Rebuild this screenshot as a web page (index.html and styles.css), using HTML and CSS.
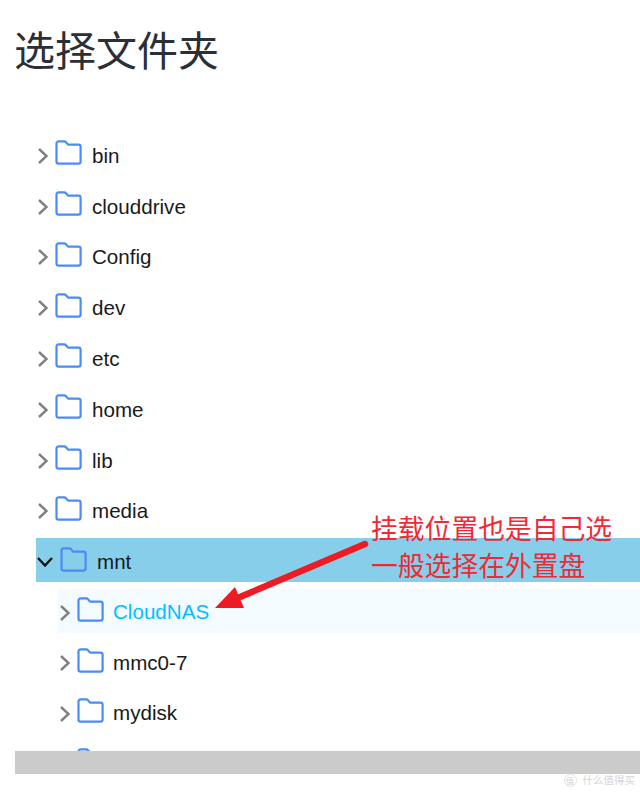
FILE: index.html
```html
<!DOCTYPE html>
<html lang="zh-CN">
<head>
  <meta charset="UTF-8">
  <title>选择文件夹</title>
  <link rel="stylesheet" href="styles.css">
</head>
<body>
  <svg class="defs" width="0" height="0">
    <symbol id="folder" viewBox="0 0 28 25">
      <path d="M2.5 3.5C2.5 2.2 3.4 1.4 4.6 1.4H10.2C11 1.4 11.5 1.7 12 2.3L14 4.6H24.4C25.7 4.6 26.6 5.5 26.6 6.8V21.4C26.6 22.7 25.7 23.6 24.4 23.6H4.6C3.4 23.6 2.5 22.7 2.5 21.4Z" fill="none" stroke="#4a8cf7" stroke-width="2.2" stroke-linejoin="round"/>
    </symbol>
    <symbol id="chev-right" viewBox="0 0 12 18">
      <path d="M2 2L9.5 9L2 16" fill="none" stroke="#808080" stroke-width="2.4"/>
    </symbol>
    <symbol id="chev-down" viewBox="0 0 18 12">
      <path d="M2 2L9 9.5L16 2" fill="none" stroke="#111" stroke-width="2.4"/>
    </symbol>
  </svg>

  <h1 class="title">选择文件夹</h1>

  <div class="tree">
    <div class="row"><svg class="chev"><use href="#chev-right"/></svg><svg class="folder"><use href="#folder"/></svg><span class="name">bin</span></div>
    <div class="row"><svg class="chev"><use href="#chev-right"/></svg><svg class="folder"><use href="#folder"/></svg><span class="name">clouddrive</span></div>
    <div class="row"><svg class="chev"><use href="#chev-right"/></svg><svg class="folder"><use href="#folder"/></svg><span class="name">Config</span></div>
    <div class="row"><svg class="chev"><use href="#chev-right"/></svg><svg class="folder"><use href="#folder"/></svg><span class="name">dev</span></div>
    <div class="row"><svg class="chev"><use href="#chev-right"/></svg><svg class="folder"><use href="#folder"/></svg><span class="name">etc</span></div>
    <div class="row"><svg class="chev"><use href="#chev-right"/></svg><svg class="folder"><use href="#folder"/></svg><span class="name">home</span></div>
    <div class="row"><svg class="chev"><use href="#chev-right"/></svg><svg class="folder"><use href="#folder"/></svg><span class="name">lib</span></div>
    <div class="row"><svg class="chev"><use href="#chev-right"/></svg><svg class="folder"><use href="#folder"/></svg><span class="name">media</span></div>
    <div class="row open"><svg class="chev-open"><use href="#chev-down"/></svg><svg class="folder"><use href="#folder"/></svg><span class="name">mnt</span></div>
    <div class="children">
      <div class="row active"><svg class="chev"><use href="#chev-right"/></svg><svg class="folder"><use href="#folder"/></svg><span class="name">CloudNAS</span></div>
      <div class="row"><svg class="chev"><use href="#chev-right"/></svg><svg class="folder"><use href="#folder"/></svg><span class="name">mmc0-7</span></div>
      <div class="row"><svg class="chev"><use href="#chev-right"/></svg><svg class="folder"><use href="#folder"/></svg><span class="name">mydisk</span></div>
      <div class="row"><svg class="chev"><use href="#chev-right"/></svg><svg class="folder"><use href="#folder"/></svg></div>
    </div>
  </div>
  <div class="scrollbar"></div>

  <!-- red note drawn over the screenshot -->
  <div class="note">挂载位置也是自己选<br>一般选择在外置盘</div>
  <svg class="arrow" width="640" height="794">
    <path d="M365 544L240 597" stroke="#ed1c24" stroke-width="6.5" stroke-linecap="round"/>
    <path d="M215 608L235 587L244 608Z" fill="#ed1c24"/>
  </svg>

  <div class="mark"><span class="mark-logo">值</span>什么值得买</div>
</body>
</html>
```

FILE: styles.css
```css
* { box-sizing: border-box; }
html, body { height: 100%; }
body {
  margin: 0;
  background: #fff;
  font-family: "Liberation Sans", Arial, "Noto Sans CJK SC", sans-serif;
  overflow: hidden;
  position: relative;
}
.defs { position: absolute; }
.title {
  margin: 0;
  padding: 24px 0 0 14px;
  height: 132px;
  font-family: "Noto Sans CJK SC", sans-serif;
  font-weight: 400;
  font-size: 41px;
  line-height: 48px;
  color: #2b2f36;
}
.tree {
  margin-left: 36px;
  height: 619px;
  overflow: hidden;
}
.row {
  display: flex;
  align-items: center;
  height: 43.5px;
  margin-bottom: 7.3px;
  font-size: 20.6px;
  color: #1a1a1a;
}
.chev { width: 12px; height: 18px; margin: 4px 0 0 1px; flex: none; }
.chev-open { width: 18px; height: 12px; margin-top: 3px; flex: none; }
.folder { width: 28px; height: 25px; margin: -2px 10px 0 5px; flex: none; }
.name { padding-top: 4px; }
.row.open { background: #87ceeb; }
.children { margin-left: 22px; }
.children .row { margin-bottom: 6.8px; }
.children .name { margin-left: -1px; padding-top: 3px; }
.row.active { background: #f3fbff; color: #00bfff; }
.scrollbar {
  margin-left: 15px;
  height: 23px;
  background: #cbcbcb;
}
.note {
  position: absolute;
  left: 371px;
  top: 509px;
  font-family: "Noto Sans CJK SC", sans-serif;
  font-size: 26.8px;
  line-height: 37px;
  color: #ee2a35;
  white-space: nowrap;
}
.arrow { position: absolute; left: 0; top: 0; }
.mark {
  position: absolute;
  right: 5px;
  top: 772px;
  display: flex;
  align-items: center;
  gap: 6px;
  font-family: "Noto Sans CJK SC", sans-serif;
  font-size: 10.5px;
  line-height: 16px;
  color: #d4d4d4;
}
.mark-logo {
  width: 13px;
  height: 13px;
  border: 1px solid #e2e2e2;
  border-radius: 50%;
  font-size: 8px;
  line-height: 11px;
  text-align: center;
}
```
